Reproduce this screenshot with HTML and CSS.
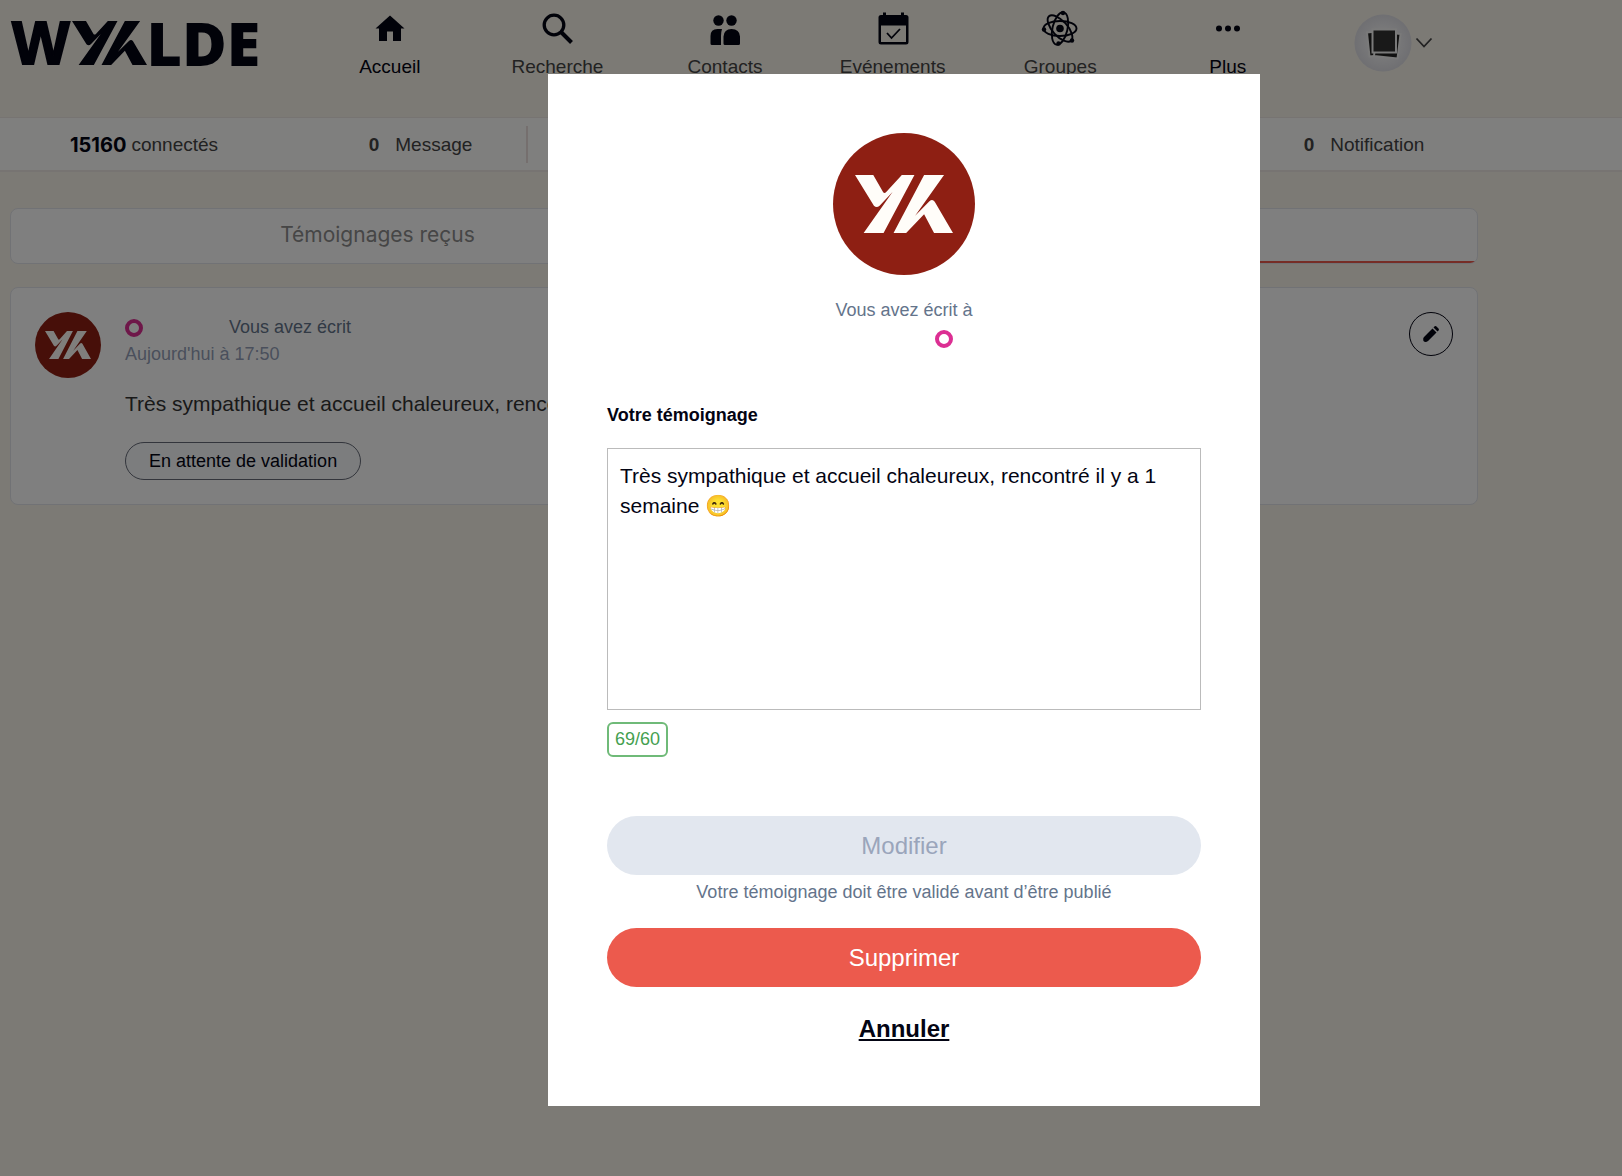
FILE: index.html
```html
<!DOCTYPE html>
<html lang="fr">
<head>
<meta charset="utf-8">
<title>Wyylde – Témoignages</title>
<link rel="stylesheet" href="styles.css">
</head>
<body>
<svg class="defs" aria-hidden="true">
  <symbol id="mark" viewBox="0 0 295 174" preserveAspectRatio="none">
    <path d="M0 0H55L84 50Q88 57 94 51L141 0H179L86 174H26L113 51L74 92Q65 100 57 92Z"/>
    <path d="M208 0H268L181 122L224 79Q233 71 240 80L295 174H238L208 118L154 174H116Z"/>
  </symbol>
  <radialGradient id="halo"><stop offset=".5" stop-color="#f2f2f4"/><stop offset="1" stop-color="#dfdfe5"/></radialGradient>
</svg>

<header class="header">
  <a class="logo" href="#" aria-label="Accueil du site"><span class="logo-start">W</span><svg class="logo-mark"><use href="#mark"/></svg><span class="logo-end">LDE</span></a>
  <nav class="nav">
    <a class="nav-item active" href="#"><svg class="icon" viewBox="0 0 40 40"><path d="M20 7.500L34.500 20.500H31V33H23V23.500H17V33H9V20.500H5.500Z"/></svg>Accueil</a>
    <a class="nav-item" href="#"><svg class="icon" viewBox="0 0 40 40"><g fill="none" stroke="currentColor"><circle cx="17" cy="17" r="9.800" stroke-width="3.300"/><path d="M24 24L34.500 34.500" stroke-width="4"/></g></svg>Recherche</a>
    <a class="nav-item" href="#"><svg class="icon" viewBox="0 0 40 40"><circle cx="13.500" cy="12.500" r="5.200"/><circle cx="26.500" cy="12.500" r="5.200"/><path d="M5.500 35.500V28Q5.500 21 12.500 21H17Q16 24 16 28V37H7Q5.500 37 5.500 35.500ZM18.500 35.500V28.500Q19 21 26.500 21Q34.500 21 35 28.500V35.500Q35 37 33.500 37H20Q18.500 37 18.500 35.500Z"/></svg>Contacts</a>
    <a class="nav-item" href="#"><svg class="icon" viewBox="0 0 40 40"><path d="M10 4.500H13V7H28V4.500H31V7H33Q35.500 7 35.500 9.500V34Q35.500 36.500 33 36.500H8Q5.500 36.500 5.500 34V9.500Q5.500 7 8 7H10ZM8 17.500V34H33V17.500Z" fill-rule="evenodd"/><path d="M14 25L18.500 30L27 21" fill="none" stroke="currentColor" stroke-width="1.800"/></svg>Evénements</a>
    <a class="nav-item" href="#"><svg class="icon" viewBox="0 0 40 40"><g fill="none" stroke="currentColor" stroke-width="1.900"><ellipse cx="20" cy="20.500" rx="16.500" ry="7.500"/><ellipse cx="20" cy="20.500" rx="16.500" ry="7.500" transform="rotate(48 20 20.500)"/><ellipse cx="20" cy="20.500" rx="16.500" ry="7.500" transform="rotate(103 20 20.500)"/></g><circle cx="20" cy="20.500" r="3.800"/><circle cx="23" cy="5" r="2.200"/><circle cx="4" cy="21.500" r="2.200"/><circle cx="32" cy="32.500" r="2.200"/><circle cx="18.500" cy="35.500" r="2.200"/></svg>Groupes</a>
    <a class="nav-item active" href="#"><svg class="icon" viewBox="0 0 40 40"><circle cx="11" cy="20.500" r="3"/><circle cx="20" cy="20.500" r="3"/><circle cx="29" cy="20.500" r="3"/></svg>Plus</a>
  </nav>
  <button class="account" type="button" aria-label="Mon compte">
    <svg class="account-photo" viewBox="0 0 58 58"><circle cx="29" cy="29" r="28.500" fill="url(#halo)"/><g stroke="#f4f4f4" stroke-width="2"><path d="M13 18.500L36 16L38 40L15.500 42.500Z" fill="#222"/><path d="M23 17L46.500 20L43.500 44.500L20 42Z" fill="#222"/><path d="M18.500 15.500H42V38.500H18.500Z" fill="#333"/></g></svg>
    <svg class="chevron" viewBox="0 0 18 12"><path d="M1.500 1.500L9 9.500L16.500 1.500" fill="none" stroke="#444" stroke-width="1.800"/></svg>
  </button>
</header>

<section class="stats">
  <a class="stat" href="#"><strong class="online">15160</strong><span>connectés</span></a>
  <a class="stat message" href="#"><strong>0</strong><span>Message</span></a>
  <a class="stat notification" href="#"><strong>0</strong><span>Notification</span></a>
</section>

<main class="content">
  <div class="tabs">
    <button class="tab" type="button">Témoignages reçus</button>
    <div class="tab selected"></div>
  </div>
  <article class="card">
    <div class="avatar"><svg class="avatar-mark"><use href="#mark"/></svg></div>
    <div class="card-body">
      <div class="card-author"><i class="ring"></i><span>Vous avez écrit</span></div>
      <time class="card-date">Aujourd'hui à 17:50</time>
      <p class="card-text">Très sympathique et accueil chaleureux, rencontré il y a 1 semaine 😁</p>
      <span class="chip">En attente de validation</span>
    </div>
    <button class="edit" type="button" aria-label="Modifier le témoignage"><svg viewBox="0 0 18 18" width="18" height="18"><path d="M10.500 3.500L14.500 7.500L6 16Q4.500 17.200 2.500 16.800Q1 16.500 1.200 14Q1.200 12.800 2 12ZM11.500 2.500L12.700 1.200Q13.500 .8 14.200 1.200L16.500 3.500Q17.200 4.300 16.800 5.200L15.500 6.500Z"/></svg></button>
  </article>
</main>

<div class="overlay">
  <div class="modal" role="dialog" aria-modal="true" aria-label="Votre témoignage">
    <div class="avatar large"><svg class="avatar-mark"><use href="#mark"/></svg></div>
    <p class="written">Vous avez écrit à</p>
    <div class="recipient"><i class="ring"></i></div>
    <label class="field-label" for="testimony">Votre témoignage</label>
    <textarea class="field" id="testimony">Très sympathique et accueil chaleureux, rencontré il y a 1 semaine 😁</textarea>
    <output class="count" for="testimony">69/60</output>
    <button class="button" type="button" disabled>Modifier</button>
    <p class="hint">Votre témoignage doit être validé avant d’être publié</p>
    <button class="button danger" type="button">Supprimer</button>
    <button class="cancel" type="button">Annuler</button>
  </div>
</div>
</body>
</html>
```
FILE: styles.css
```css
* { box-sizing: border-box; }

body {
  margin: 0;
  min-height: 100vh;
  background: #f8f4eb;
  color: #030413;
  font: 19px/24px "Liberation Sans", Arial, sans-serif;
}

a { color: inherit; text-decoration: none; }
p { margin: 0; }
svg { display: block; flex: none; fill: currentColor; }
button { margin: 0; padding: 0; border: 0; background: none; color: inherit; font: inherit; }

.defs { position: absolute; width: 0; height: 0; }

.header { display: flex; align-items: flex-start; height: 117px; }

.logo {
  display: flex;
  align-items: center;
  width: 306px;
  height: 86px;
  padding-left: 12px;
  font-size: 61px;
  line-height: 84px;
}
.logo-start { font-weight: 700; -webkit-text-stroke: 2px currentColor; }
.logo-mark { width: 75px; height: 44px; margin-left: 2px; }
.logo-end { font-family: "Open Sans", sans-serif; font-weight: 800; }

.nav { display: grid; grid-template-columns: repeat(6, 1fr); width: 62%; }
.nav-item { display: flex; flex-direction: column; align-items: center; gap: 7px; padding-top: 8px; color: #444; }
.nav-item.active { color: #030413; }
.icon { width: 40px; height: 40px; color: #030413; }

.account { display: flex; align-items: center; gap: 3px; margin: 14px 0 0 42px; }
.account-photo { width: 58px; height: 58px; }
.chevron { width: 18px; height: 12px; }

.stats {
  display: flex;
  align-items: center;
  height: 55px;
  padding-top: 1px;
  border: solid #eee8e4;
  border-width: 1px 0 2px;
  background: #fffefc;
  color: #444;
}
.stat { display: flex; align-items: center; justify-content: center; gap: 16px; height: 37px; }
.stat:first-child { gap: 5px; width: 288px; margin-right: 27px; }
.stat.message { width: 213px; border-right: 2px solid #eadfdc; }
.stat.notification { width: 208px; margin-left: 732px; }
.online { color: #030413; font-family: Inter, sans-serif; font-size: 20px; }

.content { display: flex; flex-direction: column; gap: 23px; margin-right: 144px; padding: 36px 0 0 10px; }

.tabs, .card { border: 1px solid #e3e5ea; border-radius: 8px; background: #fff; }
.tabs { display: flex; height: 56px; overflow: hidden; }
.tab { flex: 1; padding-bottom: 3px; color: #8c8c8c; font: 21px/30px Inter, sans-serif; }
.tab.selected { border-bottom: 2px solid #ec5a4d; }

.card { display: flex; align-items: flex-start; height: 218px; padding: 24px; }
.avatar { display: grid; place-items: center; flex: none; width: 66px; height: 66px; border-radius: 50%; background: #8e1f13; color: #fffdf9; }
.avatar-mark { width: 46px; height: 28px; }
.card-body { flex: 1; margin-left: 24px; padding-top: 2px; font-size: 18px; line-height: 27px; }
.card-author { display: flex; align-items: center; gap: 86px; color: #64748b; }
.card-date { display: block; color: #949fb8; }
.card-text { margin-top: 21px; color: #333; font-size: 21px; line-height: 30px; }
.chip { display: inline-block; margin-top: 23px; padding: 0 23px; border: 1px solid #666b78; border-radius: 19px; background: #f8fafc; line-height: 36px; }
.ring { width: 18px; height: 18px; border: 4px solid #dc2f93; border-radius: 50%; }
.edit { display: grid; place-items: center; width: 44px; height: 44px; border: 1px solid #030413; border-radius: 50%; }

.overlay {
  position: fixed;
  inset: 0;
  display: flex;
  align-items: flex-start;
  justify-content: center;
  padding: 74px 0 70px 186px;
  overflow: auto;
  background: rgba(0, 0, 0, .5);
}
.modal { display: flex; flex-direction: column; align-items: center; width: 712px; padding: 59px; background: #fff; }
.avatar.large { width: 142px; height: 142px; }
.large .avatar-mark { width: 98px; height: 58px; }
.written { margin-top: 22px; color: #64748b; font-size: 18px; line-height: 27px; }
.recipient { display: flex; padding: 6px 0 0 80px; }
.field-label { align-self: flex-start; margin-top: 54px; font-size: 18px; line-height: 27px; font-weight: 700; }
.field {
  width: 100%;
  height: 262px;
  margin: 19px 0 12px;
  padding: 12px;
  border: 1px solid #bbb;
  border-radius: 0;
  outline: 0;
  resize: none;
  color: #030413;
  font: 21px/30px "Liberation Sans", Arial, sans-serif;
}
.count { align-self: flex-start; padding: 0 6px; border: 2px solid #6fba78; border-radius: 6px; color: #459f50; font-size: 18px; line-height: 31px; }
.button { width: 100%; height: 59px; margin-top: 59px; border-radius: 30px; background: #e2e7ef; color: #9aa5bb; font-size: 24px; }
.hint { margin-top: 4px; color: #64748b; font-size: 18px; line-height: 27px; }
.button.danger { margin-top: 22px; background: #ec5a4d; color: #fff; }
.cancel { margin-top: 24px; font-size: 24px; line-height: 36px; font-weight: 700; text-decoration: underline; }
```
